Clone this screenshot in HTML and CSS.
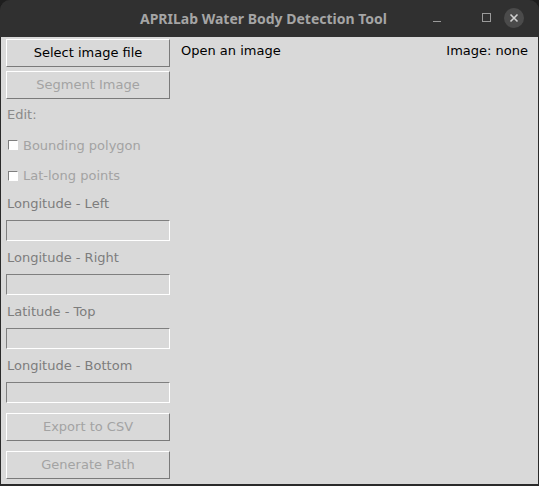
FILE: index.html
```html
<!DOCTYPE html>
<html>
<head>
<meta charset="utf-8">
<link rel="stylesheet" href="styles.css">
</head>
<body>
<div class="window">
  <div class="titlebar">
    <div class="title">APRILab Water Body Detection Tool</div>
    <div class="controls">
      <svg class="ctl min" width="14" height="14" viewBox="0 0 14 14"><line x1="3" y1="10.5" x2="11" y2="10.5" stroke="#9a9a9a" stroke-width="1"/></svg>
      <svg class="ctl max" width="14" height="14" viewBox="0 0 14 14"><rect x="2.5" y="2.5" width="8" height="8" fill="none" stroke="#9a9a9a" stroke-width="1"/></svg>
      <svg class="close" width="20" height="20" viewBox="0 0 20 20"><circle cx="10" cy="10" r="10" fill="#4b4b4b"/><path d="M6.5 6.5 L13.5 13.5 M13.5 6.5 L6.5 13.5" stroke="#d0d0d0" stroke-width="1.6"/></svg>
    </div>
  </div>
  <div class="content">
    <div class="side">
      <div class="btn">Select image file</div>
      <div class="btn disabled gap4">Segment Image</div>
      <div class="row edit">Edit:</div>
      <div class="row cb cb1"><span class="box"></span>Bounding polygon</div>
      <div class="row cb cb2"><span class="box"></span>Lat-long points</div>
      <div class="row lbl first">Longitude - Left</div>
      <div class="entry"></div>
      <div class="row lbl">Longitude - Right</div>
      <div class="entry"></div>
      <div class="row lbl">Latitude - Top</div>
      <div class="entry"></div>
      <div class="row lbl">Longitude - Bottom</div>
      <div class="entry"></div>
      <div class="btn disabled gap10">Export to CSV</div>
      <div class="btn disabled gap10">Generate Path</div>
    </div>
    <div class="main">
      <div class="status">Open an image</div>
      <div class="imgname">Image: none</div>
    </div>
  </div>
</div>
</body>
</html>
```

FILE: styles.css
```css
html, body {
  margin: 0;
  padding: 0;
  background: #1e1e1e;
}
.window {
  width: 539px;
  height: 486px;
  box-sizing: border-box;
  display: flex;
  flex-direction: column;
  background: #2a2a2a;
  border-radius: 10px 10px 0 0;
  overflow: hidden;
  font-family: "DejaVu Sans", sans-serif;
  font-size: 13px;
}
.titlebar {
  height: 37px;
  flex: none;
  background: #303030;
  display: flex;
  align-items: center;
  justify-content: center;
  position: relative;
}
.title {
  font-family: "Noto Sans", "DejaVu Sans", sans-serif;
  font-weight: bold;
  font-size: 14px;
  color: #a5a5a5;
  margin-right: 12px;
}
.controls {
  position: absolute;
  right: 15px;
  top: 8px;
  display: flex;
  align-items: center;
}
.min { margin-right: 36px; }
.max { margin-right: 10px; }
.content {
  flex: 1;
  background: #d9d9d9;
  margin: 0 1px 2px 1px;
  display: flex;
}
.side {
  width: 164px;
  margin-left: 5px;
  padding-top: 2px;
  display: flex;
  flex-direction: column;
}
.btn {
  height: 28px;
  box-sizing: border-box;
  border: 1px solid;
  border-color: #ffffff #7a7a7a #7a7a7a #ffffff;
  display: flex;
  align-items: center;
  justify-content: center;
  padding-bottom: 2px;
  color: #000;
}
.btn.disabled { color: #a3a3a3; }
.gap4 { margin-top: 4px; }
.gap10 { margin-top: 10px; }
.row {
  display: flex;
  align-items: center;
  padding-left: 1px;
}
.edit { height: 31px; color: #8a8a8a; }
.cb { color: #a3a3a3; }
.cb1 { height: 30px; }
.cb2 { height: 31px; }
.cb .box {
  width: 10px;
  height: 10px;
  box-sizing: border-box;
  background: #fff;
  border: 1px solid;
  border-color: #7f7f7f #ffffff #ffffff #7f7f7f;
  margin-left: 1px;
  margin-right: 5px;
}
.lbl { height: 33px; color: #7d7d7d; }
.lbl.first { height: 29px; box-sizing: border-box; padding-bottom: 5px; }
.entry {
  height: 21px;
  box-sizing: border-box;
  border: 1px solid;
  border-color: #7f7f7f #ffffff #ffffff #7f7f7f;
}
.main {
  flex: 1;
  display: flex;
  justify-content: space-between;
  align-items: flex-start;
  padding: 6px 10px 0 11px;
  color: #000;
}
```
